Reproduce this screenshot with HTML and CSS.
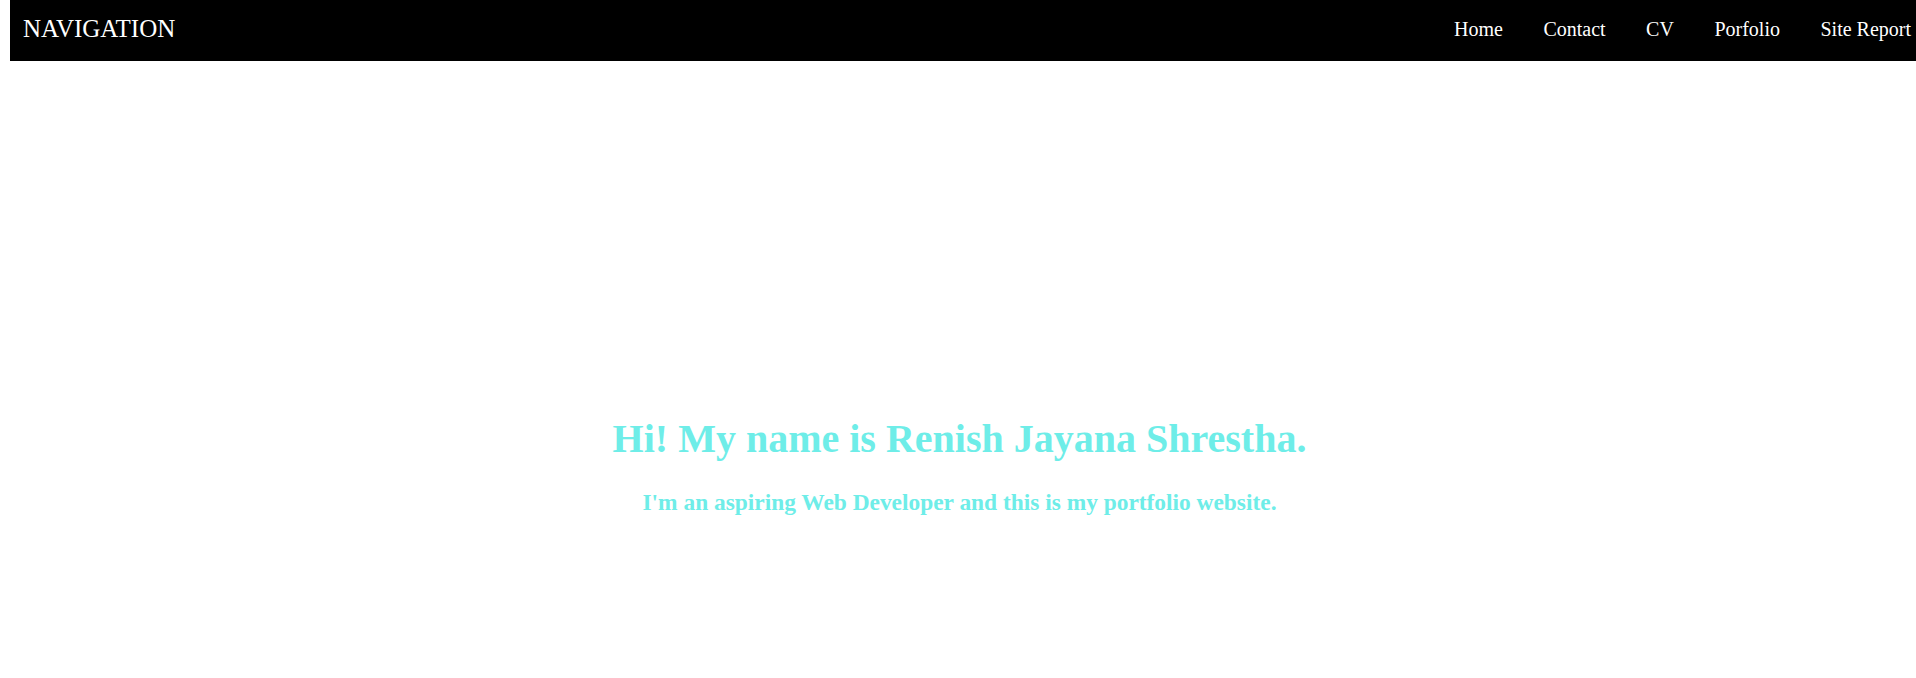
FILE: index.html
```html
<!DOCTYPE html>
<html lang="en">
<head>
<meta charset="utf-8">
<title>Renish Jayana Shrestha - Portfolio</title>
<link rel="stylesheet" href="styles.css">
</head>
<body>
<nav class="topnav">
  <div class="brand">NAVIGATION</div>
  <ul class="links">
    <li><a href="#">Home</a></li>
    <li><a href="#">Contact</a></li>
    <li><a href="#">CV</a></li>
    <li><a href="#">Porfolio</a></li>
    <li><a href="#">Site Report</a></li>
  </ul>
</nav>
<main class="hero">
  <h1 class="hero-title">Hi! My name is Renish Jayana Shrestha.</h1>
  <p class="hero-sub">I'm an aspiring Web Developer and this is my portfolio website.</p>
</main>
</body>
</html>
```
FILE: styles.css
```css
html, body {
  margin: 0;
  padding: 0;
  background: #ffffff;
  overflow: hidden;
}
body {
  font-family: "Liberation Serif", "Times New Roman", serif;
  height: 678px;
}
.topnav {
  display: flex;
  align-items: flex-start;
  margin-left: 10px;
  height: 61px;
  padding: 0 5px 0 13px;
  background: #000000;
  color: #ffffff;
}
.brand {
  font-size: 25px;
  line-height: 28px;
  padding-top: 15.3px;
}
.links {
  display: flex;
  gap: 40.5px;
  list-style: none;
  margin: 0 0 0 auto;
  padding: 17.25px 0 0 0;
}
.links a {
  display: block;
  color: #ffffff;
  text-decoration: none;
  font-size: 20px;
  line-height: 24px;
}
.hero {
  display: flex;
  flex-direction: column;
  align-items: center;
  padding: 355px 0 0 3px;
  color: #6eede8;
  font-weight: bold;
  text-align: center;
}
.hero-title {
  margin: 0;
  font-size: 40px;
  line-height: 46px;
}
.hero-sub {
  margin: 27px 0 0 0;
  font-size: 23.4px;
  line-height: 27px;
}
```
